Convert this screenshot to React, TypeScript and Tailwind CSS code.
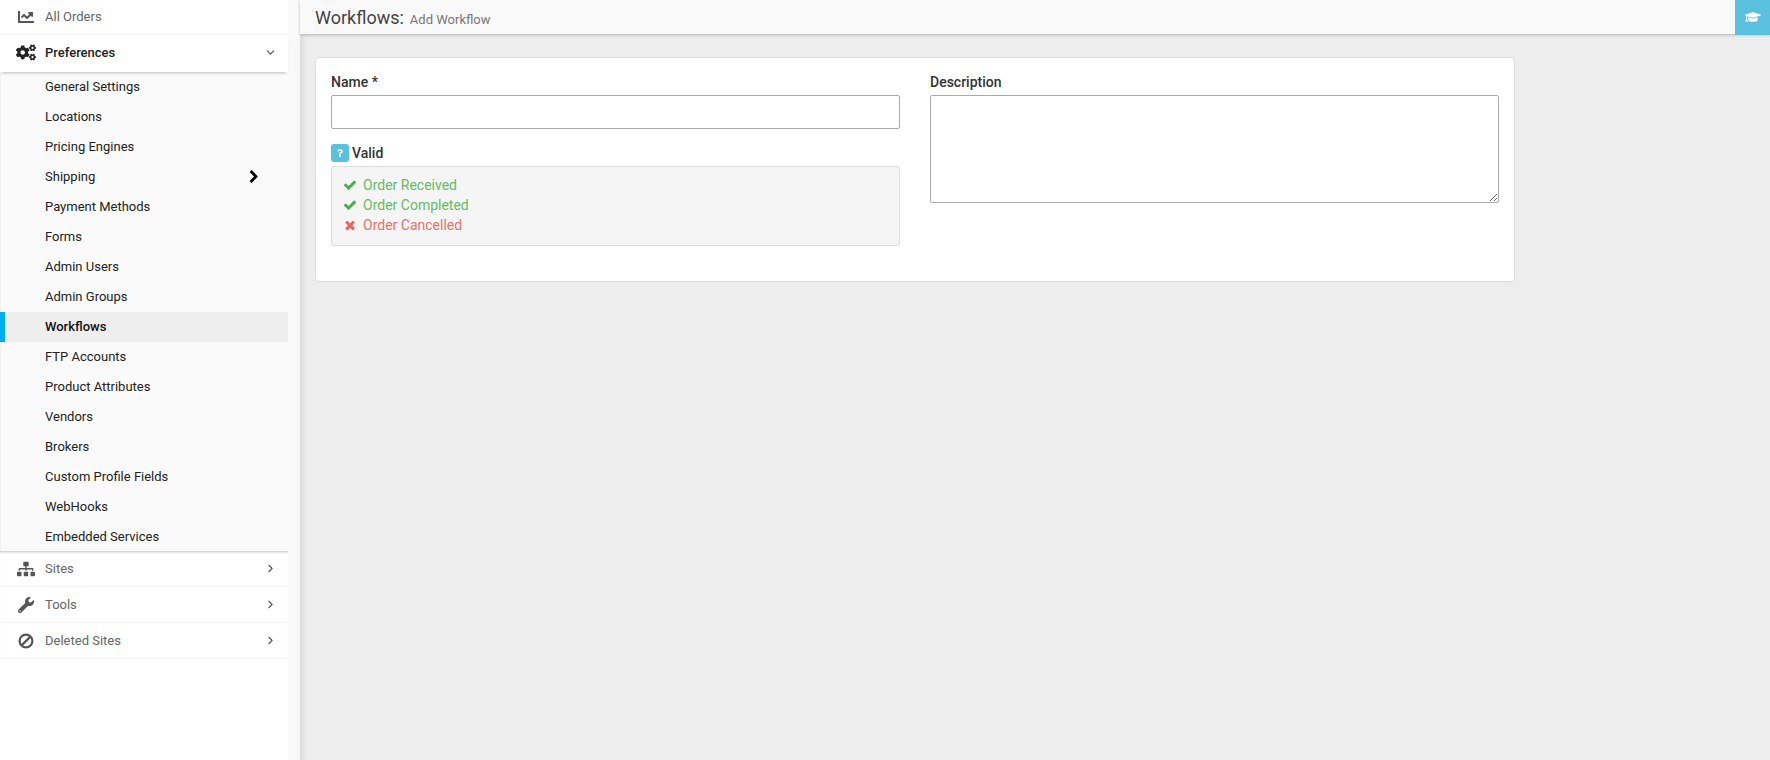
import React from 'react';
import { FaChartLine, FaCogs, FaGraduationCap, FaQuestion, FaSitemap, FaWrench } from 'react-icons/fa';
import { ChevronDown, ChevronRight } from 'lucide-react';

const subItems = [
  'General Settings',
  'Locations',
  'Pricing Engines',
  'Shipping',
  'Payment Methods',
  'Forms',
  'Admin Users',
  'Admin Groups',
  'Workflows',
  'FTP Accounts',
  'Product Attributes',
  'Vendors',
  'Brokers',
  'Custom Profile Fields',
  'WebHooks',
  'Embedded Services',
];

// Font Awesome 4 shapes, heavier than the ones in the icon package
const CheckIcon = () => (
  <svg viewBox="0 0 1792 1792" className="h-[14px] w-[14px] fill-[#4cae4c]">
    <path d="M1671 566q0 40-28 68l-724 724-136 136q-28 28-68 28t-68-28l-136-136-362-362q-28-28-28-68t28-68l136-136q28-28 68-28t68 28l294 295 656-657q28-28 68-28t68 28l136 136q28 28 28 68z" />
  </svg>
);

const TimesIcon = () => (
  <svg viewBox="0 0 1792 1792" className="h-[14px] w-[14px] fill-[#e9655f]">
    <path d="M1490 1322q0 40-28 68l-136 136q-28 28-68 28t-68-28l-294-294-294 294q-28 28-68 28t-68-28l-136-136q-28-28-28-68t28-68l294-294-294-294q-28-28-28-68t28-68l136-136q28-28 68-28t68 28l294 294 294-294q28-28 68-28t68 28l136 136q28 28 28 68t-28 68l-294 294 294 294q28 28 28 68z" />
  </svg>
);

const ShippingChevron = () => (
  <svg viewBox="0 0 1792 1792" className="h-[14px] w-[14px] fill-black">
    <path d="M1363 877l-742 742q-19 19-45 19t-45-19l-166-166q-19-19-19-45t19-45l531-531-531-531q-19-19-19-45t19-45l166-166q19-19 45-19t45 19l742 742q19 19 19 45t-19 45z" />
  </svg>
);

const BanIcon = () => (
  <svg viewBox="0 0 16 16" className="h-[16px] w-[16px] fill-none stroke-[#555]" strokeWidth="2.2">
    <circle cx="8" cy="8" r="6.4" />
    <path d="M3.6 12.4L12.4 3.6" />
  </svg>
);

const bottomItems = [
  { label: 'Sites', icon: <FaSitemap className="h-[18px] w-[18px]" /> },
  { label: 'Tools', icon: <FaWrench className="h-[16px] w-[16px]" /> },
  { label: 'Deleted Sites', icon: <BanIcon /> },
];

const App: React.FC = () => {
  return (
    <div className="flex h-[760px] w-[1770px] overflow-hidden bg-[#ededed] font-['Roboto',sans-serif] text-[13px]">
      {/* Sidebar */}
      <div className="flex w-[300px] shrink-0 bg-[#f9f9f9]">
        <div className="w-[288px] bg-white">
          <div className="flex h-[35px] items-center border-b border-[#f3f3f3] text-[#666]">
            <div className="flex w-[45px] justify-center pl-[7px]">
              <FaChartLine className="h-[16px] w-[20px] text-[#555]" />
            </div>
            <span>All Orders</span>
          </div>
          <div className="relative z-10 flex h-[37px] items-center justify-between pb-[2px] pr-[11px] font-medium text-[#222] shadow-[0_3px_3px_-2px_rgba(0,0,0,0.25)]">
            <div className="flex items-center">
              <div className="flex w-[45px] justify-center pl-[7px]">
                <FaCogs className="h-[19px] w-[20px] text-[#222]" />
              </div>
              <span>Preferences</span>
            </div>
            <ChevronDown className="h-[13px] w-[13px] text-[#555]" />
          </div>

          <div className="border-l border-[#f1f1f1] bg-[#fafafa]">
            {subItems.map((item) => {
              const active = item === 'Workflows';
              return (
                <div
                  key={item}
                  className={
                    active
                      ? '-ml-px flex h-[30px] items-center border-l-[5px] border-[#00aeef] bg-[#eeeeee] pl-[40px] font-medium text-[#111]'
                      : 'flex h-[30px] items-center justify-between pl-[44px] pr-[27px] text-[#222]'
                  }
                >
                  <span>{item}</span>
                  {item === 'Shipping' && <ShippingChevron />}
                </div>
              );
            })}
          </div>

          <div className="-mt-px bg-white shadow-[inset_0_3px_3px_-2px_rgba(0,0,0,0.25)]">
            {bottomItems.map((item) => (
              <div key={item.label} className="flex h-[36px] items-center justify-between border-b border-[#f3f3f3] pr-[11px] text-[#666]">
                <div className="flex items-center">
                  <div className="flex w-[45px] justify-center pl-[7px] text-[#555]">{item.icon}</div>
                  <span>{item.label}</span>
                </div>
                <ChevronRight className="h-[13px] w-[13px] text-[#555]" />
              </div>
            ))}
          </div>
        </div>
      </div>

      {/* Main */}
      <div className="min-w-0 flex-1 shadow-[inset_8px_0_6px_-6px_rgba(0,0,0,0.1)]">
        <div className="flex h-[34px] items-center justify-between bg-[#f9f9f9] pl-[15px] shadow-[0_1px_3px_rgba(0,0,0,0.25)]">
          <div className="flex items-baseline gap-[6px]">
            <span className="text-[18px] text-[#444]">Workflows:</span>
            <span className="text-[13px] text-[#777]">Add Workflow</span>
          </div>
          <div className="flex h-[35px] w-[35px] items-center justify-center bg-[#5bc0de] text-white">
            <FaGraduationCap className="h-[16px] w-[16px]" />
          </div>
        </div>

        <div className="pl-[15px] pt-[23px]">
          <div className="flex h-[225px] w-[1200px] gap-[30px] rounded-[4px] border border-[#dddddd] bg-white px-[15px] pt-[15px]">
            <div className="w-[569px]">
              <label className="block h-[22px] text-[14px] font-medium leading-[18px] text-[#333]">Name *</label>
              <input type="text" className="block h-[34px] w-full rounded-[2px] border border-[#aaaaaa] bg-white" />
              <div className="mt-[14px] flex h-[20px] items-center gap-[3px]">
                <span className="flex h-[18px] w-[18px] items-center justify-center rounded-[3px] bg-[#5bc0de] text-white">
                  <FaQuestion className="h-[8px] w-[8px]" />
                </span>
                <span className="text-[14px] font-medium text-[#333]">Valid</span>
              </div>
              <div className="mt-[3px] h-[80px] rounded-[3px] border border-[#dddddd] bg-[#f5f5f5] px-[11px] pt-[8px] text-[14px] leading-[20px]">
                <div className="flex items-center gap-[6px] text-[#66bb66]">
                  <CheckIcon />
                  <span>Order Received</span>
                </div>
                <div className="flex items-center gap-[6px] text-[#66bb66]">
                  <CheckIcon />
                  <span>Order Completed</span>
                </div>
                <div className="flex items-center gap-[6px] text-[#e8736c]">
                  <TimesIcon />
                  <span>Order Cancelled</span>
                </div>
              </div>
            </div>
            <div className="w-[569px]">
              <label className="block h-[22px] text-[14px] font-medium leading-[18px] text-[#333]">Description</label>
              <textarea className="block h-[108px] w-full rounded-[2px] border border-[#aaaaaa] bg-white" />
            </div>
          </div>
        </div>
      </div>
    </div>
  );
};

export default App;
